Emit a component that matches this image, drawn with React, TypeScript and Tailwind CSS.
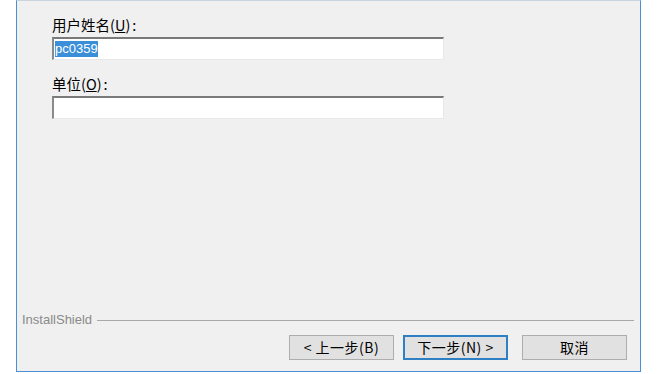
import * as React from 'react';

const cjk = "font-['Microsoft_YaHei','Noto_Sans_CJK_SC',sans-serif]";

function Field({ value, selected }: { value?: string; selected?: boolean }) {
  return (
    <div className="mt-[3px] flex h-[23px] w-[392px] items-center border-t-2 border-l-2 border-r border-b border-t-[#7a7a7a] border-l-[#8a8a8a] border-r-[#e8e8e8] border-b-[#e8e8e8] bg-white pl-[1px]">
      {value && (
        <span
          className={
            "font-['Liberation_Sans',sans-serif] text-[13px] leading-[16px] " +
            (selected ? 'bg-[#3b8fd8] text-white' : 'text-black')
          }
        >
          {value}
        </span>
      )}
    </div>
  );
}

function Label({ text, hotkey }: { text: string; hotkey: string }) {
  return (
    <div className={`${cjk} text-[14.5px] leading-[18px] text-black`}>
      {text}(<span className="underline">{hotkey}</span>)<span className="ml-[2px]">:</span>
    </div>
  );
}

function Button({
  children,
  focused,
}: {
  children: React.ReactNode;
  focused?: boolean;
}) {
  return (
    <button
      type="button"
      className={
        `${cjk} flex h-[25px] w-[105px] items-center justify-center bg-[#e1e1e1] text-[14px] tracking-[0.5px] text-black ` +
        (focused ? 'border-2 border-[#2f7fc4]' : 'border border-[#adadad]')
      }
    >
      {children}
    </button>
  );
}

export default function App() {
  return (
    <div className="h-[374px] w-[662px] overflow-hidden bg-white">
      <div className="ml-[16px] flex h-[372px] w-[625px] flex-col border-x border-b border-[#4a90d6] border-t border-t-[#c8d4de] bg-[#f0f0f0]">
        <div className="pl-[35px] pt-[15px]">
          <Label text="用户姓名" hotkey="U" />
          <Field value="pc0359" selected />
          <div className="mt-[15px]">
            <Label text="单位" hotkey="O" />
          </div>
          <Field />
        </div>

        <div className="flex-1" />

        <div className="flex items-center gap-[5px] pl-[5px] pr-[6px]">
          <span className="font-['Liberation_Sans',sans-serif] text-[13px] leading-[14px] text-[#8a8a8a]">
            InstallShield
          </span>
          <div className="h-px flex-1 bg-[#a8a8a8]" />
        </div>

        <div className="mt-[8px] mb-[11px] flex justify-end gap-[9px] pr-[13px]">
          <Button>&lt; 上一步(B)</Button>
          <Button focused>下一步(N) &gt;</Button>
          <div className="ml-[5px]">
            <Button>取消</Button>
          </div>
        </div>
      </div>
    </div>
  );
}
